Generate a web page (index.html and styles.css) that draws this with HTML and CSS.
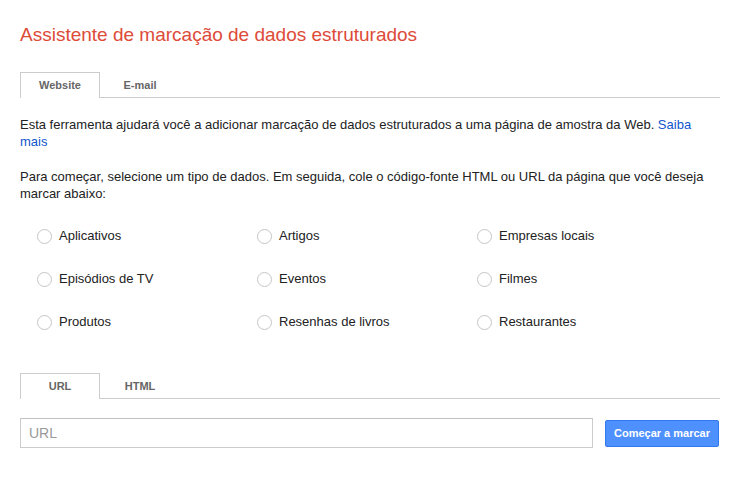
FILE: index.html
```html
<!DOCTYPE html>
<html lang="pt-BR">
<head>
<meta charset="utf-8">
<title>Assistente de marcação de dados estruturados</title>
<link rel="stylesheet" href="styles.css">
</head>
<body>
<div class="page">
  <h1 class="title">Assistente de marcação de dados estruturados</h1>
  <div class="tabs tabs-top">
    <div class="tab active">Website</div>
    <div class="tab">E-mail</div>
  </div>
  <p class="intro">Esta ferramenta ajudará você a adicionar marcação de dados estruturados a uma página de amostra da Web. <a href="#" class="link">Saiba mais</a></p>
  <p class="intro second">Para começar, selecione um tipo de dados. Em seguida, cole o código-fonte HTML ou URL da página que você deseja marcar abaixo:</p>
  <div class="types">
    <label class="opt"><span class="radio"></span>Aplicativos</label>
    <label class="opt"><span class="radio"></span>Artigos</label>
    <label class="opt"><span class="radio"></span>Empresas locais</label>
    <label class="opt"><span class="radio"></span>Episódios de TV</label>
    <label class="opt"><span class="radio"></span>Eventos</label>
    <label class="opt"><span class="radio"></span>Filmes</label>
    <label class="opt"><span class="radio"></span>Produtos</label>
    <label class="opt"><span class="radio"></span>Resenhas de livros</label>
    <label class="opt"><span class="radio"></span>Restaurantes</label>
  </div>
  <div class="tabs tabs-bottom">
    <div class="tab active">URL</div>
    <div class="tab">HTML</div>
  </div>
  <div class="url-row">
    <div class="url-input">URL</div>
    <button class="btn">Começar a marcar</button>
  </div>
</div>
</body>
</html>
```

FILE: styles.css
```css
html, body {
  margin: 0;
  padding: 0;
  background: #fff;
}
body {
  font-family: Arial, "Liberation Sans", sans-serif;
  font-size: 13px;
  color: #222;
}
.page {
  width: 700px;
  padding: 23px 0 0 20px;
}
.title {
  margin: 0;
  font-size: 19px;
  font-weight: normal;
  line-height: 24px;
  color: #dd4b39;
}
.tabs {
  display: flex;
  border-bottom: 1px solid #ccc;
  height: 25px;
}
.tabs-top {
  margin-top: 25px;
}
.tab {
  width: 80px;
  box-sizing: border-box;
  height: 26px;
  line-height: 24px;
  text-align: center;
  font-size: 11px;
  font-weight: bold;
  color: #666;
  border: 1px solid transparent;
  border-bottom: none;
}
.tab.active {
  border-color: #ccc;
  background: #fff;
}
.intro {
  margin: 18px 0 0;
  line-height: 17px;
}
.intro.second {
  margin-top: 18px;
}
.link {
  color: #15c;
  text-decoration: none;
}
.types {
  display: grid;
  grid-template-columns: 220px 220px 220px;
  row-gap: 23px;
  margin-top: 24px;
  padding-left: 17px;
}
.opt {
  display: flex;
  align-items: center;
  height: 20px;
  line-height: 20px;
}
.radio {
  width: 13px;
  height: 13px;
  border: 1px solid #c6c6c6;
  border-radius: 50%;
  margin-right: 7px;
  flex: none;
}
.tabs-bottom {
  margin-top: 41px;
}
.url-row {
  display: flex;
  align-items: center;
  margin-top: 19px;
}
.url-input {
  width: 573px;
  height: 30px;
  box-sizing: border-box;
  border: 1px solid #ccc;
  border-top-color: #c0c0c0;
  line-height: 28px;
  padding: 0 0 0 8px;
  margin-right: 12px;
  font-size: 14px;
  color: #999;
}
.btn {
  height: 27px;
  width: 114px;
  padding: 0;
  border: 1px solid #3079ed;
  border-radius: 2px;
  background: #4d90fe;
  color: #fff;
  font-family: Arial, "Liberation Sans", sans-serif;
  font-size: 11px;
  font-weight: bold;
}
```
